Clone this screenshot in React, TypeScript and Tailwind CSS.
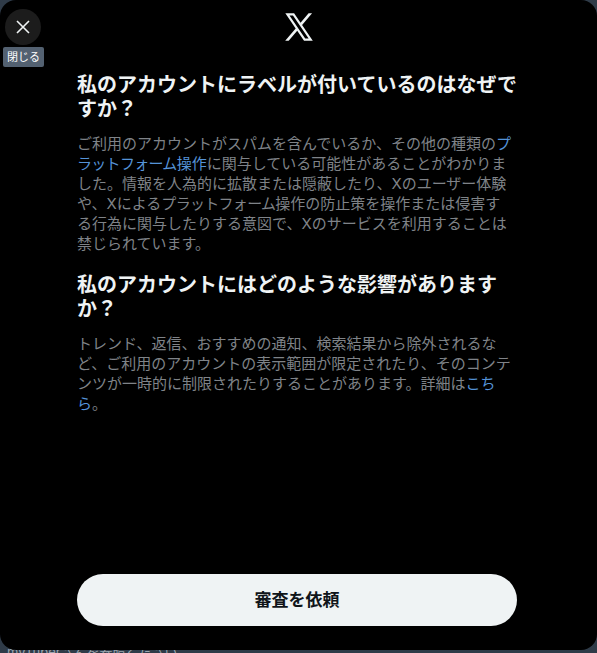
export default function App() {
  const sans = { fontFamily: '"Inter", "Noto Sans CJK JP", sans-serif' };
  return (
    <div className="relative w-[597px] h-[653px] overflow-hidden bg-[#2f3b48]" style={sans}>
      <div className="pt-[642px] pl-[7px] text-[13px] leading-[20px] text-[#9aa4ae]">myTuberさんを参照ください</div>
      <div className="absolute inset-x-0 top-0 h-[650px] rounded-[16px] bg-black flex flex-col">
        <div className="relative h-[53px] flex justify-center items-start shrink-0">
          <button className="absolute left-[5px] top-[9px] w-[36px] h-[36px] rounded-full bg-[#1c1c1c] flex items-center justify-center">
            <svg viewBox="0 0 20 20" className="w-[20px] h-[20px] stroke-[#eff3f4]" strokeWidth="1.6" fill="none"><path d="M4 4L16 16M16 4L4 16"/></svg>
          </button>
          <div className="absolute left-[3px] top-[47px] w-[41px] h-[20px] rounded-[2px] bg-[#536171] text-white text-[11px] leading-[20px] text-center">閉じる</div>
          <svg viewBox="0 0 24 24" className="mt-[10px] w-[34px] h-[34px] fill-[#eff3f4]"><path d="M21.742 21.75l-7.563-11.179 7.056-8.321h-2.456l-5.691 6.714-4.54-6.714H2.359l7.29 10.776L2.25 21.75h2.456l6.035-7.118 4.818 7.118h6.191-.008zM7.739 3.818L18.81 20.182h-2.447L5.29 3.818h2.447z"/></svg>
        </div>
        <div className="w-[440px] ml-[77px] mt-[20px]">
          <h2 className="text-[20px] leading-[24px] font-bold text-[#eff3f4]">私のアカウントにラベルが付いているのはなぜですか？</h2>
          <p className="mt-[13px] text-[15px] leading-[20px] text-[#7f8388]">ご利用のアカウントがスパムを含んでいるか、その他の種類の<span className="text-[#5593d8]">プ<span className="tracking-[-0.7px]">ラットフォーム</span>操作</span>に関与している可能性があることがわかりました。情報を人為的に拡散または隠蔽したり、Xのユーザー体験や、Xによる<span className="tracking-[-0.7px]">プラットフォーム</span>操作の防止策を操作または侵害す<br />る行為に関与したりする意図で、Xのサービスを利用することは禁じられています。</p>
          <h2 className="mt-[19px] text-[20px] leading-[24px] font-bold text-[#eff3f4]">私のアカウントにはどのような影響がありますか？</h2>
          <p className="mt-[13px] text-[15px] leading-[20px] text-[#7f8388]">トレンド、返信、おすすめの通知、検索結果から除外されるな<br />ど、ご利用のアカウントの表示範囲が限定されたり、そのコンテンツが一時的に制限されたりすることがあります。詳細は<span className="text-[#5593d8]">こちら</span>。</p>
        </div>
        <button className="mt-auto mb-[24px] ml-[77px] w-[440px] h-[52px] pt-[2px] shrink-0 rounded-full bg-[#eff3f4] text-[#0f1419] text-[17px] font-bold">審査を依頼</button>
      </div>
    </div>
  );
}
